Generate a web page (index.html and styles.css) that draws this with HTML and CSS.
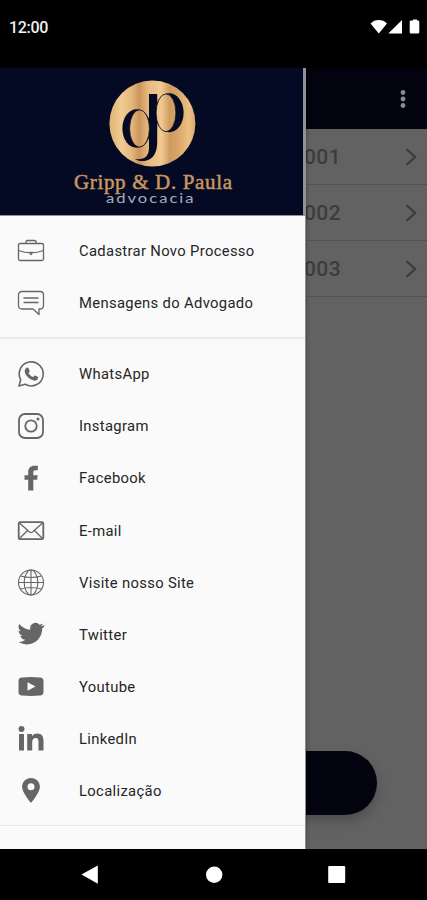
FILE: index.html
```html
<!DOCTYPE html>
<html lang="pt-BR">
<head>
<meta charset="utf-8">
<title>Gripp &amp; D. Paula</title>
<link rel="stylesheet" href="styles.css">
</head>
<body>
<div class="phone">
  <header class="status">
    <span class="clock">12:00</span>
    <svg class="status-icons" width="50" height="16" viewBox="0 0 50 16" fill="#fff">
      <path d="M0.5 4.5C5-.1 12.500-.1 17 4.500L8.800 14.500z"/>
      <path d="M32 1v13.500H18.300z"/>
      <path d="M41 1.500h2V.4h4v1.100h1q1.300 0 1.300 1.300v10.400q0 1.300-1.300 1.300h-7q-1.300 0-1.300-1.300V2.800q0-1.300 1.300-1.300z"/>
    </svg>
  </header>

  <div class="screen">
    <main class="page">
      <div class="appbar">
        <svg width="8" height="20" viewBox="0 0 8 20" fill="#8b8b8d"><circle cx="4" cy="3.500" r="2.400"/><circle cx="4" cy="10" r="2.400"/><circle cx="4" cy="16.500" r="2.400"/></svg>
      </div>
      <ul class="cases">
        <li><span>001</span><svg class="chevron" viewBox="0 0 12 18"><path d="M1.500 1l8.500 8-8.500 8"/></svg></li>
        <li><span>002</span><svg class="chevron" viewBox="0 0 12 18"><path d="M1.500 1l8.500 8-8.500 8"/></svg></li>
        <li><span>003</span><svg class="chevron" viewBox="0 0 12 18"><path d="M1.500 1l8.500 8-8.500 8"/></svg></li>
      </ul>
      <div class="action"></div>
    </main>

    <aside class="drawer">
      <svg class="brand" width="304" height="147" viewBox="0 68 304 147">
        <defs>
          <linearGradient id="gold" x1="109" y1="0" x2="196" y2="0" gradientUnits="userSpaceOnUse">
            <stop offset="0" stop-color="#e0b070"/><stop offset=".14" stop-color="#f0cb94"/>
            <stop offset=".26" stop-color="#e4b77d"/><stop offset=".35" stop-color="#cb955b"/>
            <stop offset=".45" stop-color="#e6ba80"/><stop offset=".6" stop-color="#f0ca92"/>
            <stop offset=".7" stop-color="#cf9b60"/><stop offset=".78" stop-color="#d6a468"/>
            <stop offset=".92" stop-color="#ecc084"/><stop offset="1" stop-color="#d9a769"/>
          </linearGradient>
        </defs>
        <circle cx="152.400" cy="123.500" r="43" fill="url(#gold)"/>
        <g fill="#050a24">
          <path d="M149 94h8.200v48c0 12.500-5.500 19-14.500 19-3.200 0-5.700-.7-7.800-2.100 8.600 1.400 14.100-1.900 14.100-11.400z"/>
          <ellipse cx="136.600" cy="128.500" rx="14.200" ry="19.300"/>
          <ellipse cx="169.300" cy="112.800" rx="14.300" ry="19.500"/>
        </g>
        <ellipse cx="139.500" cy="128.500" rx="9.900" ry="18.500" fill="url(#gold)"/>
        <ellipse cx="166" cy="112.800" rx="9.900" ry="18.700" fill="url(#gold)"/>
        <g fill="none" stroke="#050a24" stroke-width=".8">
          <ellipse cx="139.500" cy="128.500" rx="9.900" ry="18.700"/>
          <ellipse cx="166" cy="112.800" rx="9.900" ry="18.900"/>
        </g>
        <text class="brand-name" x="74" y="188.500" textLength="158" lengthAdjust="spacing">Gripp &amp; D. Paula</text>
        <text class="brand-sub" x="106" y="202.800" textLength="89.500" lengthAdjust="spacingAndGlyphs">advocacia</text>
      </svg>

      <nav>
        <ul class="group">
          <li><svg class="icon line" viewBox="0 0 28 28"><rect x="1.500" y="6.500" width="25" height="17" rx="1.500"/><path d="M9 6.500V4.800q0-1.300 1.300-1.300h7.400q1.300 0 1.300 1.300v1.700M1.500 13.500c8 3 17 3 25 0M12.500 15.500h3l-1.500 2z"/></svg>Cadastrar Novo Processo</li>
          <li><svg class="icon line" viewBox="0 0 28 28"><path d="M5 2.500h18q3.500 0 3.500 3.500v10.500q0 3.500-3.500 3.500h-1v5.500L16 20H5q-3.500 0-3.500-3.500V6Q1.500 2.500 5 2.500zM6.500 9h15M6.500 13.500h15"/></svg>Mensagens do Advogado</li>
        </ul>
        <ul class="group last">
          <li><svg class="icon line chat" viewBox="0 0 28 28"><path d="M2 26l1.700-6.300A12 12 0 1 1 8.200 24.300z"/><path class="solid" d="M9.500 7.800c.7-.5 1.500-.4 1.900.3l1.200 2.600c.3.800-.6 1.500-1.100 2.200 1.200 2.100 2.700 3.300 4.700 4.200.7-.7 1.300-1.900 2.100-1.500l2.600 1.300c.6.500 0 2.600-1.200 3.200-1.500.9-3.300.6-5.600-.5-3.200-1.600-6-4.800-6.400-8-.1-1.500.8-3.100 1.800-3.800z"/></svg>WhatsApp</li>
          <li><svg class="icon line bold" viewBox="0 0 28 28"><rect x="2" y="2" width="24" height="24" rx="6"/><circle cx="14" cy="14" r="5.700"/><circle class="solid" cx="21" cy="7" r="1.500"/></svg>Instagram</li>
          <li><svg class="icon" viewBox="0 0 28 28"><path d="M11.200 26.500V15.800H7.500v-4.500h3.700V8.200c0-4 2.200-6.400 6.300-6.400h3.300v4.500h-2.100c-2 0-2.400.8-2.400 2.400v2.600h4.400l-.6 4.500h-3.800v10.700z"/></svg>Facebook</li>
          <li><svg class="icon line bold" viewBox="0 0 28 28"><rect x="1.700" y="5.200" width="24.600" height="17" rx="1.500"/><path class="fine" d="M2.500 6l10 9q1.500 1.200 3 0l10-9M2.500 21.500l8-8M25.500 21.500l-8-8"/></svg>E-mail</li>
          <li><svg class="icon line globe" viewBox="0 0 28 28"><circle cx="14" cy="13.500" r="12.500"/><ellipse cx="14" cy="13.500" rx="6.800" ry="12.500"/><path d="M14 1v25M1.500 13.500h25M3.500 7q10.500 3 21 0M3.500 20q10.500-3 21 0"/></svg>Visite nosso Site</li>
          <li><svg class="icon" viewBox="-.8 .8 25.600 25.600"><path d="M23.600 4.900a9.600 9.600 0 0 1-2.800.8 4.900 4.900 0 0 0 2.100-2.700 9.800 9.800 0 0 1-3.100 1.200 4.900 4.900 0 0 0-8.400 4.500A13.900 13.900 0 0 1 1.300 3.500a4.900 4.900 0 0 0 1.500 6.600 4.900 4.900 0 0 1-2.200-.6c0 2.300 1.600 4.400 3.900 4.900-.7.200-1.500.2-2.200.1a4.900 4.900 0 0 0 4.600 3.400A9.900 9.900 0 0 1 .7 20a13.900 13.900 0 0 0 7.500 2.200c9.100 0 14.300-7.700 14-14.600.9-.7 1.700-1.600 2.400-2.700z"/></svg>Twitter</li>
          <li><svg class="icon" viewBox="0 .5 28 28"><path fill-rule="evenodd" d="M5 5q9-.8 18 0 3.500.3 3.500 3.500v11q0 3.200-3.500 3.500-9 .8-18 0-3.500-.3-3.500-3.500v-11Q1.500 5.300 5 5zm5.500 4.800v8.400l8-4.200z"/></svg>Youtube</li>
          <li><svg class="icon" viewBox="0 0 28 28"><circle cx="4.500" cy="4" r="3"/><path d="M2 9h5v16.500H2zM10.200 9H15v2.300c1-1.700 2.800-2.700 5.200-2.700 4.800 0 6.300 3 6.300 7.500v9.400h-5v-8.300c0-2.300-.4-4.200-2.800-4.200s-3.500 1.800-3.500 4.200v8.300h-5z"/></svg>LinkedIn</li>
          <li><svg class="icon" viewBox="0 .5 28 28"><path fill-rule="evenodd" d="M14 1.500c-5 0-8.900 3.900-8.900 8.800 0 6.100 8.900 16.200 8.900 16.200s8.900-10.100 8.900-16.200c0-4.900-3.900-8.800-8.900-8.800zm0 5.300a3.500 3.500 0 1 1 0 7 3.500 3.500 0 0 1 0-7z"/></svg>Localização</li>
        </ul>
      </nav>
    </aside>
  </div>

  <footer class="navbar">
    <svg width="427" height="51" viewBox="0 849 427 51" fill="#fff">
      <path d="M81.500 874.500L97.800 865.500v18.200z"/><circle cx="214.200" cy="874.800" r="8.200"/><rect x="328.200" y="866" width="17" height="17" rx="1"/>
    </svg>
  </footer>
</div>
</body>
</html>
```
FILE: styles.css
```css
* { box-sizing: border-box; }
body { margin: 0; background: #000; font-family: Roboto, sans-serif; }
ul { list-style: none; margin: 0; padding: 0; }
svg { display: block; flex: none; }

.phone { display: flex; flex-direction: column; width: 427px; height: 900px; overflow: hidden; }
.status { display: flex; justify-content: space-between; height: 68px; padding: 19px 7px 0 9px; }
.clock { color: #f0f0f0; font-size: 16px; font-weight: 500; line-height: 18px; letter-spacing: -.3px; }

.screen { position: relative; height: 781px; overflow: hidden; }
.page { display: flex; flex-direction: column; height: 100%; background: #626262; }
.appbar { display: flex; align-items: center; justify-content: flex-end; height: 61px; padding-right: 20px; background: #02030f; }
.cases li { display: flex; align-items: center; justify-content: space-between; height: 56px; padding: 0 10px 0 304px; border-bottom: 1px solid #535353; color: #3c3c3c; font-size: 21px; font-weight: 500; letter-spacing: .4px; }
.chevron { width: 12px; height: 18px; fill: none; stroke: #3b3b3b; stroke-width: 2.200; }
.action { width: 327px; height: 64px; margin: auto 0 34px 50px; border-radius: 32px; background: #02030f; box-shadow: 0 6px 12px rgba(0, 0, 0, .22); }

.drawer { position: absolute; top: 0; left: 0; width: 306px; height: 781px; background: #fafafa; border-right: 1px solid #8a8a8a; box-shadow: 0 0 4px rgba(0, 0, 0, .35); }
.brand { width: 306px; height: 148px; padding: 0 2px 1px 0; background: linear-gradient(#050a24, #050a24) 0 0 / 303px 147px no-repeat #929292; }
.brand-name { fill: #c9965f; stroke: #c9965f; stroke-width: .5; font-family: "Liberation Serif", serif; font-size: 21px; }
.brand-sub { fill: #a8acb8; font-family: Lato, sans-serif; font-size: 12.500px; letter-spacing: 1.500px; }

.group { padding: 9px 0 8px; border-bottom: 2px solid #e9e9e9; }
.group li { display: flex; align-items: center; gap: 34px; height: 52.100px; padding-left: 17px; color: #262626; font-size: 14.800px; letter-spacing: .33px; }
.last { border-bottom-width: 1px; }
.icon { width: 28px; height: 28px; fill: #666; }
.line { fill: none; stroke: #666; stroke-width: 1.300; stroke-linejoin: round; }
.bold { stroke-width: 1.800; }
.chat { stroke-width: 1.600; }
.fine { stroke-width: 1.300; }
.globe { stroke-width: 1.100; }
.solid { fill: #666; stroke: none; }

.navbar { height: 51px; background: #000; }
```
